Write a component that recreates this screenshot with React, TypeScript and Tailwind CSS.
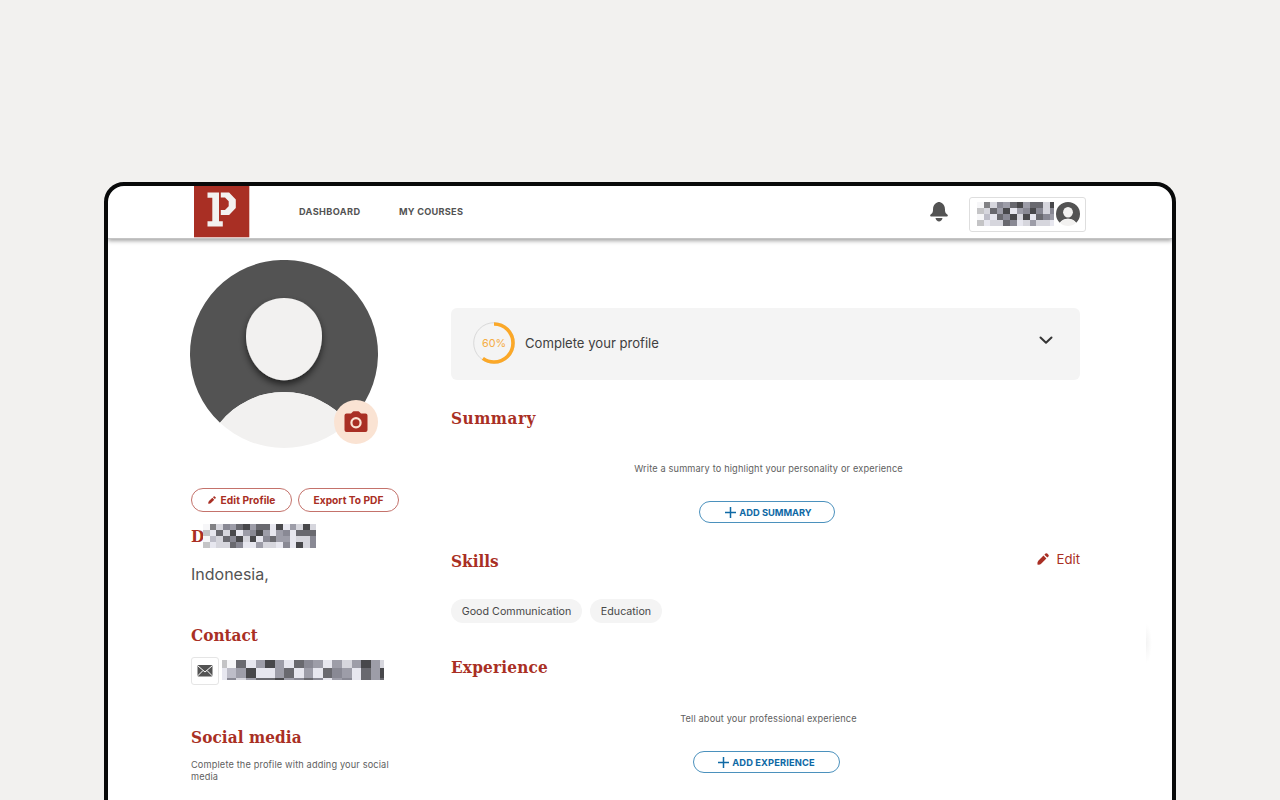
import React from "react";

const TONES: Record<string, string> = {
  W: "#f6f6f8",
  g: "#c4c4c6",
  G: "#818184",
  l: "#e7e7ef",
  s: "#d6d6dd",
  b: "#bdbdc8",
  m: "#9d9da8",
  n: "#898994",
  d: "#69696f",
  k: "#48484b",
};

const HEADER_ROWS = ["WGsnmdkmddsk", "gsdmklmnknsn", "Wbldnkskldnm", "glssdnlsmssl"];
const NAME_ROWS = ["WGsnmdkmddlklmsks", "gldsklmnkmlmnlddd", "Wbsdnksklndmmlssn", "glssdnllmsslnlksn"];
const MAIL_ROWS = ["gWdlmkmldnmlmsmkms", "lbmkllmdlmldnmldmk", "lnsmddkmndnlmnldmd"];

type MosaicProps = {
  rows: string[];
  cell: number;
  rowHeights: number[];
  width: number;
  offset?: number;
};

function Mosaic({ rows, cell, rowHeights, width, offset = 0 }: MosaicProps) {
  const height = rowHeights.reduce((a, b) => a + b, 0);
  return (
    <svg width={width} height={height} viewBox={`0 0 ${width} ${height}`} shapeRendering="crispEdges" className="shrink-0" aria-hidden="true">
      {rows.map((row, r) => {
        const y = rowHeights.slice(0, r).reduce((a, b) => a + b, 0);
        return row
          .split("")
          .map((c, i) => (
            <rect key={`${r}-${i}`} x={i * cell - offset} y={y} width={cell + 0.05} height={rowHeights[r]} fill={TONES[c]} />
          ));
      })}
    </svg>
  );
}

function Logo() {
  return (
    <svg width="56" height="52" viewBox="0 0 56 52" className="shrink-0" aria-hidden="true">
      <rect width="55.300" height="51.300" fill="#a92f24" />
      <path fill="#f3f1f0" d="M13.500 6.400H25v28.800h3.800v5.200H13.500v-5.200h4.800V11.800h-4.800z" />
      <path fill="#f3f1f0" d="M26.800 6.400h8.300l6.700 7.200v8.300l-6.700 7.200h-8.300v-5.200h4.200l3.700-3.600v-5.100l-3.700-3.600h-4.200z" />
    </svg>
  );
}

function Pencil({ size }: { size: number }) {
  return (
    <svg width={size} height={size} viewBox="0 0 12 12" fill="#a92f24" className="shrink-0" aria-hidden="true">
      <path d="M0.400 11.600Q.1 9 1.500 7.600L6.500 2.600 9.400 5.500 4.400 10.500Q3 12 .400 11.600z" />
      <path d="M7.400 1.700 8.500.6q.8-.8 1.700 0l1.200 1.200q.8.8 0 1.700l-1.100 1.100z" />
    </svg>
  );
}

function Portrait() {
  return (
    <svg width="188" height="188" viewBox="0 0 188 188" aria-hidden="true">
      <defs>
        <filter id="head-shadow" x="-30%" y="-30%" width="160%" height="160%">
          <feDropShadow dx="0" dy="4" stdDeviation="3.500" floodColor="#000" floodOpacity="0.600" />
        </filter>
      </defs>
      <path d="M30 162.800A94 94 0 1 1 158 162.800A82 82 0 0 0 30 162.800Z" fill="#535353" />
      <path d="M30 162.800A82 82 0 0 1 158 162.800A94 94 0 0 1 30 162.800Z" fill="#f2f1f0" />
      <path
        d="M94 38C116 38 132 55 132 76C132 99 116 120.200 94 120.200S56 99 56 76C56 55 72 38 94 38Z"
        fill="#f2f1f0"
        filter="url(#head-shadow)"
      />
    </svg>
  );
}

function SmallPortrait() {
  return (
    <svg width="24" height="24" viewBox="0 0 24 24" aria-hidden="true">
      <path d="M3.820 20.780A12 12 0 1 1 20.180 20.780A10.400 10.400 0 0 0 3.820 20.780Z" fill="#535353" />
      <path d="M3.820 20.780A10.400 10.400 0 0 1 20.180 20.780A12 12 0 0 1 3.820 20.780Z" fill="#f2f1f0" />
      <ellipse cx="12" cy="10.200" rx="4.900" ry="5.300" fill="#f2f1f0" />
    </svg>
  );
}

function Heading({ children, className }: { children: React.ReactNode; className: string }) {
  return (
    <h2 className={`font-['DejaVu_Serif_Condensed','DejaVu_Serif',serif] text-[17px] leading-6 font-bold text-[#a92f24] ${className}`}>
      {children}
    </h2>
  );
}

function AddButton({ label, className }: { label: string; className: string }) {
  return (
    <button className={`flex h-[22px] items-center justify-center gap-[3px] rounded-full border border-[#4b91bd] text-[9.300px] font-bold text-[#0e69a5] ${className}`}>
      <svg width="11" height="11" viewBox="0 0 11 11" stroke="#0e69a5" strokeWidth="1.500" aria-hidden="true">
        <path d="M5.500 0v11M0 5.500h11" />
      </svg>
      <span className="pt-px whitespace-nowrap">{label}</span>
    </button>
  );
}

function TopBar() {
  return (
    <header className="flex h-[53px] shrink-0 items-start border-b border-[#c4c4c4] pl-[86px] shadow-[0_2px_4px_rgba(0,0,0,0.35)]">
      <Logo />
      <nav className="flex pt-[18px] text-[9.200px] leading-4 font-bold text-[#535353]">
        <a className="ml-[49px] w-[100px] tracking-[0.360px]">DASHBOARD</a>
        <a className="tracking-[0.250px] whitespace-nowrap">MY COURSES</a>
      </nav>
      <div className="mr-[86px] ml-auto flex items-start">
        <svg width="20" height="20" viewBox="0 0 20 20" fill="#535353" className="mt-4 mr-[20.500px]" aria-hidden="true">
          <path d="M10 0C12 0 16 2 16 7.500C16 11 17 11.400 18.600 12.800Q19.500 14.400 18 14.400H2Q.5 14.400 1.400 12.800C3 11.400 4 11 4 7.500C4 2 8 0 10 0Z" />
          <path d="M6.500 15.900h7c-.4 2.200-1.900 3.500-3.500 3.500s-3.100-1.300-3.500-3.500z" />
        </svg>
        <div className="mt-[11px] flex h-[35px] w-[117px] items-center rounded-[3px] border border-[#dedede] pb-[2px] pl-[7px]">
          <Mosaic rows={HEADER_ROWS} cell={6.600} rowHeights={[6, 6, 6, 6]} width={77} />
          <div className="ml-[2px]">
            <SmallPortrait />
          </div>
        </div>
      </div>
    </header>
  );
}

function Sidebar() {
  return (
    <aside className="ml-[82px] w-[261px] shrink-0 pt-[21px]">
      <div className="relative size-[188px]">
        <Portrait />
        <div className="absolute right-0 bottom-1 flex size-11 items-center justify-center rounded-full bg-[#fae3d3]">
          <svg width="24" height="22" viewBox="0 0 24 22" className="-mt-[1px]" aria-hidden="true">
            <path fill="#a92f24" d="M2.500 2.600H7L8.500 1Q9 .3 9.700.3h4.600q.7 0 1.200.6L17 2.600h4.500q2 0 2 2V19q0 2-2 2h-19q-2 0-2-2V4.600q0-2 2-2z" />
            <circle cx="12" cy="11.700" r="4.600" fill="none" stroke="#fae3d3" strokeWidth="2.200" />
          </svg>
        </div>
      </div>
      <div className="mt-10 ml-px flex gap-[6px] text-[10.200px] font-bold text-[#a92f24]">
        <button className="flex h-6 w-[101px] items-center justify-center gap-[5px] rounded-full border border-[#c4726b]">
          <Pencil size={8} />
          <span className="pt-px tracking-[0.080px] whitespace-nowrap">Edit Profile</span>
        </button>
        <button className="h-6 w-[101px] rounded-full border border-[#c4726b] pt-px whitespace-nowrap">Export To PDF</button>
      </div>
      <div className="mt-3 ml-px flex h-6 items-center">
        <Heading className="w-[11.500px]">D</Heading>
        <Mosaic rows={NAME_ROWS} cell={6.670} rowHeights={[6, 6, 6, 6]} width={113} />
      </div>
      <p className="mt-[14px] ml-px h-6 text-[16px] leading-6 text-[#535353]">Indonesia,</p>
      <Heading className="mt-[37px] ml-px">Contact</Heading>
      <div className="mt-[10px] ml-px flex h-7 items-start">
        <div className="flex size-7 items-center justify-center rounded-[3px] border border-[#e5e5e5]">
          <svg width="16" height="12" viewBox="0 0 16 12" aria-hidden="true">
            <rect x="0.500" width="15" height="11.500" rx="1" fill="#535353" />
            <path d="M.8.800 8 7l7.200-6.200M.8 10.800 6 5.500M15.200 10.800 10 5.500" fill="none" stroke="#fff" strokeWidth="1" />
          </svg>
        </div>
        <div className="mt-[3px] ml-[3px]">
          <Mosaic rows={MAIL_ROWS} cell={9.600} rowHeights={[8, 10, 2]} width={162} offset={4.900} />
        </div>
      </div>
      <Heading className="mt-10 ml-px tracking-[0.080px]">Social media</Heading>
      <p className="mt-[10px] ml-px w-[210px] text-[9.200px] leading-3 tracking-[0.150px] text-[#606060]">
        Complete the profile with adding your social
        <br />
        media
      </p>
    </aside>
  );
}

function Content() {
  return (
    <main className="w-[629px] shrink-0 pt-[69px]">
      <section className="flex h-[72px] items-center rounded-md bg-[#f4f4f4] pr-[27px] pb-[2px] pl-[22px]">
        <svg width="42" height="42" viewBox="0 0 42 42" className="shrink-0" aria-hidden="true">
          <circle cx="21" cy="21" r="20.300" fill="none" stroke="#d9d9d9" strokeWidth="1" />
          <circle cx="21" cy="21" r="19" fill="none" stroke="#fba828" strokeWidth="3.600" pathLength="100" strokeDasharray="60 40" transform="rotate(-90 21 21)" />
          <text x="21" y="25" textAnchor="middle" fill="#f5ad45" fontSize="10.800">
            60%
          </text>
        </svg>
        <p className="ml-[10px] pt-[2px] text-[13.100px] text-[#404040]">Complete your profile</p>
        <svg width="14" height="9" viewBox="0 0 14 9" fill="none" stroke="#353535" strokeWidth="2" strokeLinecap="round" strokeLinejoin="round" className="-mt-[5px] ml-auto" aria-hidden="true">
          <path d="M1.500 1.500 7 6.800l5.500-5.300" />
        </svg>
      </section>

      <Heading className="mt-[26px] tracking-[0.500px]">Summary</Heading>
      <p className="mt-[33px] ml-[6px] text-center text-[9.200px] leading-3 tracking-[0.155px] text-[#606060]">
        Write a summary to highlight your personality or experience
      </p>
      <AddButton label="ADD SUMMARY" className="mt-[26px] ml-[248px] w-[136px] pl-[3px]" />

      <div className="mt-[26px] flex h-6 items-start justify-between">
        <Heading className="">Skills</Heading>
        <a className="flex items-center gap-[7px] text-[13.200px] leading-5 text-[#a92f24]">
          <Pencil size={12} />
          Edit
        </a>
      </div>
      <div className="mt-[26px] flex h-6 gap-2 text-[10.700px] leading-[25px] whitespace-nowrap text-[#484848]">
        <span className="w-[131px] rounded-full bg-[#f4f4f4] text-center">Good Communication</span>
        <span className="w-[72px] rounded-full bg-[#f4f4f4] text-center">Education</span>
      </div>

      <Heading className="mt-8 tracking-[0.200px]">Experience</Heading>
      <p className="mt-[34px] ml-[6px] text-center text-[9.200px] leading-3 tracking-[0.140px] text-[#606060]">
        Tell about your professional experience
      </p>
      <AddButton label="ADD EXPERIENCE" className="mt-[26px] ml-[242px] w-[147px] tracking-[0.120px]" />
    </main>
  );
}

export default function App() {
  return (
    <div className="flex h-[800px] w-[1280px] justify-center overflow-hidden bg-[#f2f1ef] pt-[182px] font-['Inter',sans-serif]">
      <div className="flex h-[700px] w-[1072px] shrink-0 flex-col overflow-hidden rounded-[20px] border-4 border-[#080909] bg-white">
        <TopBar />
        <div className="flex">
          <Sidebar />
          <Content />
          <div className="mt-[384px] ml-[66px] h-[40px] w-[6px] bg-[radial-gradient(ellipse_at_left,#f3f3f3,#ffffff_70%)]" />
        </div>
      </div>
    </div>
  );
}
